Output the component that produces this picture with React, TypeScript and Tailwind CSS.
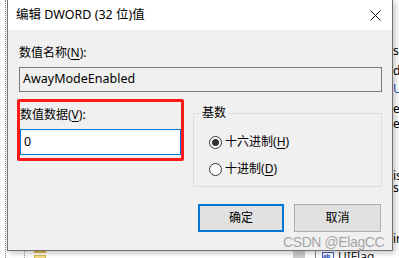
import React from 'react';

const ui = { fontFamily: '"Segoe UI", "Noto Sans", "Noto Sans CJK SC", sans-serif' };

function Radio({ checked, label, mnemonic }: { checked?: boolean; label: string; mnemonic: string }) {
  return (
    <div className="flex items-center h-[16px]">
      <span className="w-[13px] h-[13px] rounded-full border border-[#333] bg-white flex items-center justify-center">
        {checked && <span className="w-[7px] h-[7px] rounded-full bg-[#333]" />}
      </span>
      <span className="ml-[3px] text-[12px] leading-[16px] text-black">
        {label}(<span className="underline underline-offset-2">{mnemonic}</span>)
      </span>
    </div>
  );
}

// fragments of the registry editor behind the dialog
const behind = [
  { top: 44, text: 'se', color: 'text-black' },
  { top: 64, text: 'de', color: 'text-black' },
  { top: 82, text: 'U', color: 'text-[#1a4cc4]' },
  { top: 102, text: 'es', color: 'text-black' },
  { top: 117, text: 'es', color: 'text-black' },
  { top: 169, text: 'is', color: 'text-black' },
  { top: 181, text: 's', color: 'text-black' },
  { top: 232, text: 'ir', color: 'text-black' },
];

export default function App() {
  return (
    <div className="relative w-[399px] h-[258px] overflow-hidden bg-white" style={ui}>
      {/* registry editor behind */}
      <div className="absolute left-[5px] top-0 h-[258px] border-l border-dotted border-[#888]" />
      <div className="absolute left-[24px] top-[248px] h-[10px] border-l border-dotted border-[#888]" />
      <div className="absolute left-[34px] top-[249px] w-[12px] h-[4px] bg-[#d9b448]" />
      <div className="absolute left-[34px] top-[255px] w-[12px] h-[4px] border border-[#d9b448] bg-[#f6dd84]" />
      <div className="absolute left-[293px] top-[249px] w-[12px] h-[10px] bg-[#cdcdcd]" />
      <div className="absolute left-[315px] top-[249px] w-px h-[10px] bg-[#888]" />
      <div className="absolute left-[322px] top-[252px] w-[12px] h-[8px] border border-[#4060c0] text-[6px] leading-none text-[#2040b0] font-bold">
        ab
      </div>
      <div className="absolute left-[338px] top-[250px] text-[12px] leading-[14px] text-[#222]">UIFlag</div>
      {behind.map((b) => (
        <div key={b.top} className={`absolute left-[393px] text-[12px] leading-[14px] ${b.color}`} style={{ top: b.top }}>
          {b.text}
        </div>
      ))}

      {/* dialog */}
      <div className="absolute left-[7px] top-[-1px] w-[386px] h-[252px] border border-[#707070] flex flex-col shadow-[2px_2px_6px_rgba(0,0,0,0.25)]">
        <div className="h-[30px] bg-white flex items-center justify-between pl-[8px] pr-[10px] shrink-0">
          <span className="text-[12.5px] leading-[16px] text-black">编辑 DWORD (32 位)值</span>
          <svg width="11" height="11" viewBox="0 0 11 11" className="mr-[1px]">
            <path d="M0.5 0.5 L10.5 10.5 M10.5 0.5 L0.5 10.5" stroke="#111" strokeWidth="1" />
          </svg>
        </div>

        <div className="flex-1 bg-[#f0f0f0] pl-[11px] pr-[10px] text-black">
          <div className="mt-[15px] text-[12px] leading-[16px]">
            数值名称(<span className="underline underline-offset-2">N</span>):
          </div>
          <div className="mt-[6px] h-[25px] border border-[#7a7a7a] bg-[#f0f0f0] pl-[3px] flex items-center text-[12.5px]">
            AwayModeEnabled
          </div>

          <div className="mt-[7px] flex items-start">
            <div className="ml-[-2px] w-[167px] h-[62px] border-[3px] border-[#ff1a1a] rounded-[2px]">
              <div className="pt-[5px] text-[12px] leading-[16px]">
                数值数据(<span className="underline underline-offset-2">V</span>):
              </div>
              <div className="mt-[6px] w-[161px] h-[26px] border border-[#0078d7] bg-white pl-[3px] flex items-center text-[12.5px]">
                0
              </div>
            </div>

            <div className="relative ml-[9px] mt-[14px] w-[189px] h-[74px] border border-[#dcdcdc]">
              <span className="absolute left-[6px] top-[-9px] px-[2px] bg-[#f0f0f0] text-[12px] leading-[16px]">基数</span>
              <div className="pl-[15px] pt-[20px] flex flex-col gap-[11px]">
                <Radio checked label="十六进制" mnemonic="H" />
                <Radio label="十进制" mnemonic="D" />
              </div>
            </div>
          </div>

          <div className="mt-[17px] flex justify-end gap-[10px] pr-[1px]">
            <button className="w-[86px] h-[28px] border-2 border-[#0078d7] bg-[#e1e1e1] text-[12px] text-black">确定</button>
            <button className="w-[87px] h-[28px] border border-[#adadad] bg-[#e1e1e1] text-[12px] text-black">取消</button>
          </div>
        </div>
      </div>

      {/* watermark */}
      <div
        className="absolute left-[283px] top-[233px] text-[14px] leading-[18px] text-[#a3a3a3] tracking-[-0.4px]"
        style={{ fontFamily: '"Liberation Sans", Arial, sans-serif', textShadow: '0 0 1px #fff' }}
      >
        CSDN @ElagCC
      </div>
    </div>
  );
}
